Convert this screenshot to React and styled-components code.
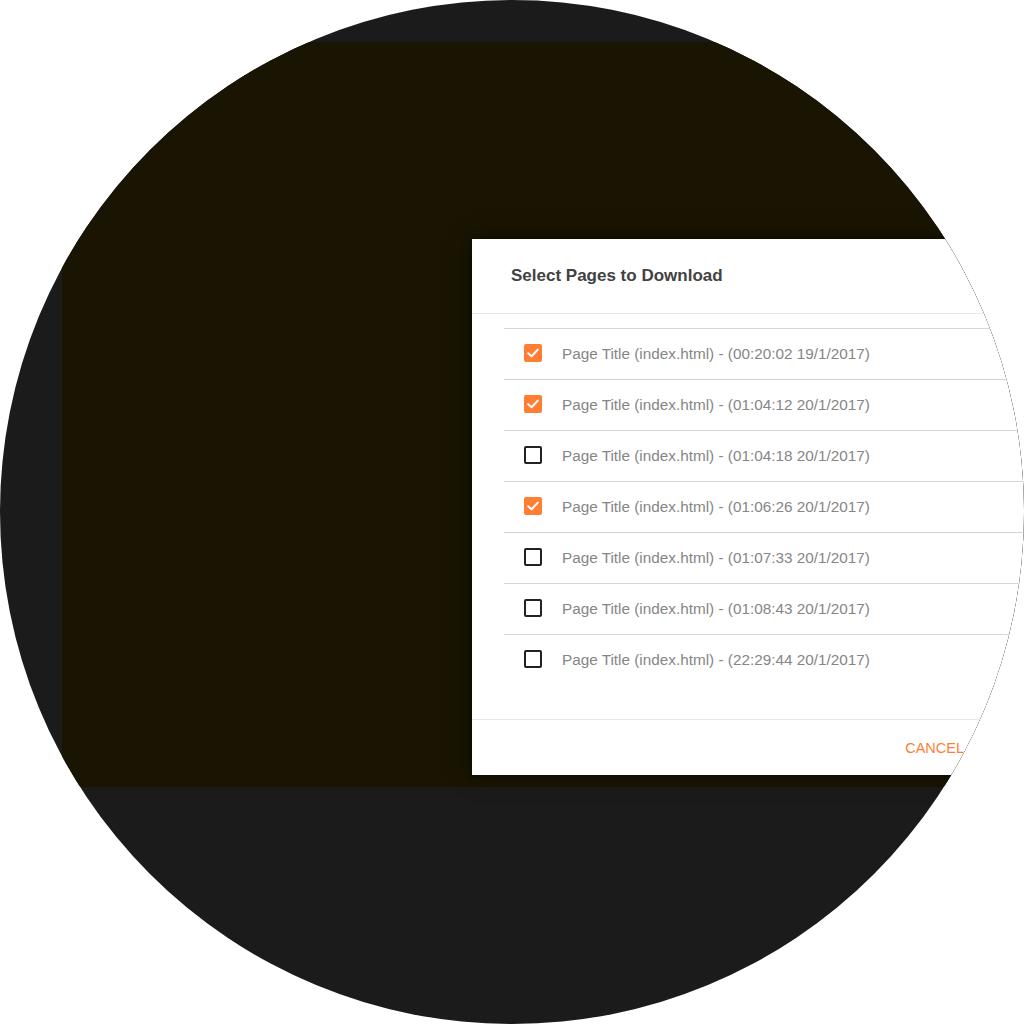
import React from "react";
import styled, { createGlobalStyle } from "styled-components";

const pages = [
  { time: "00:20:02 19/1/2017", checked: true },
  { time: "01:04:12 20/1/2017", checked: true },
  { time: "01:04:18 20/1/2017", checked: false },
  { time: "01:06:26 20/1/2017", checked: true },
  { time: "01:07:33 20/1/2017", checked: false },
  { time: "01:08:43 20/1/2017", checked: false },
  { time: "22:29:44 20/1/2017", checked: false },
];

const ORANGE = "#fe7e33";

export default function App() {
  return (
    <>
      <GlobalStyle />
      <Circle>
        <Backdrop>
          <Dialog>
            <Header>Select Pages to Download</Header>
            <List>
              {pages.map((p) => (
                <Row key={p.time}>
                  <Box checked={p.checked}>
                    {p.checked && (
                      <svg width="16" height="16" viewBox="0 0 16 16">
                        <path
                          d="M3.2 8.2 L6.6 11.2 L12.8 4.6"
                          fill="none"
                          stroke="#fff"
                          strokeWidth="2"
                          strokeLinecap="round"
                          strokeLinejoin="round"
                        />
                      </svg>
                    )}
                  </Box>
                  <Label>Page Title (index.html) - ({p.time})</Label>
                </Row>
              ))}
            </List>
            <Footer>
              <CancelButton>CANCEL</CancelButton>
            </Footer>
          </Dialog>
        </Backdrop>
      </Circle>
    </>
  );
}

const GlobalStyle = createGlobalStyle`
  html, body {
    margin: 0;
    padding: 0;
    background: #ffffff;
  }
  body {
    font-family: "Liberation Sans", Arial, sans-serif;
  }
`;

const Circle = styled.div`
  width: 1024px;
  height: 1024px;
  border-radius: 50%;
  overflow: hidden;
  background: #1b1b1b;
  padding-top: 42px;
  padding-left: 62px;
  box-sizing: border-box;
`;

const Backdrop = styled.div`
  position: relative;
  height: 745px;
  background: #1a1502;
`;

const Dialog = styled.div`
  position: absolute;
  left: 410px;
  top: 197px;
  width: 580px;
  height: 536px;
  background: #ffffff;
  box-shadow: 0 0 20px rgba(0, 0, 0, 0.5), 0 1px 3px rgba(0, 0, 0, 0.4);
  display: flex;
  flex-direction: column;
`;

const Header = styled.div`
  height: 75px;
  box-sizing: border-box;
  padding: 27px 0 0 39px;
  font-size: 17px;
  font-weight: bold;
  color: #424242;
  border-bottom: 1px solid #e8e8e8;
`;

const List = styled.div`
  flex: 1;
  padding: 14px 0 0 32px;
`;

const Row = styled.div`
  display: flex;
  align-items: center;
  gap: 20px;
  height: 50px;
  padding-left: 20px;
  border-top: 1px solid #d6d6d6;
`;

const Box = styled.div`
  width: 18px;
  height: 18px;
  box-sizing: border-box;
  border-radius: 2px;
  margin-top: -2px;
  display: flex;
  align-items: center;
  justify-content: center;
  background: ${(p) => (p.checked ? ORANGE : "transparent")};
  border: ${(p) => (p.checked ? "none" : "2px solid #222")};
`;

const Label = styled.span`
  font-size: 15.3px;
  color: #868686;
  margin-top: -1px;
`;

const Footer = styled.div`
  height: 55px;
  border-top: 1px solid #e8e8e8;
  display: flex;
  align-items: center;
  justify-content: flex-end;
  padding-right: 88px;
`;

const CancelButton = styled.button`
  border: none;
  background: none;
  padding: 0;
  font-family: "Liberation Sans", Arial, sans-serif;
  font-size: 14.5px;
  color: ${ORANGE};
  cursor: pointer;
`;
